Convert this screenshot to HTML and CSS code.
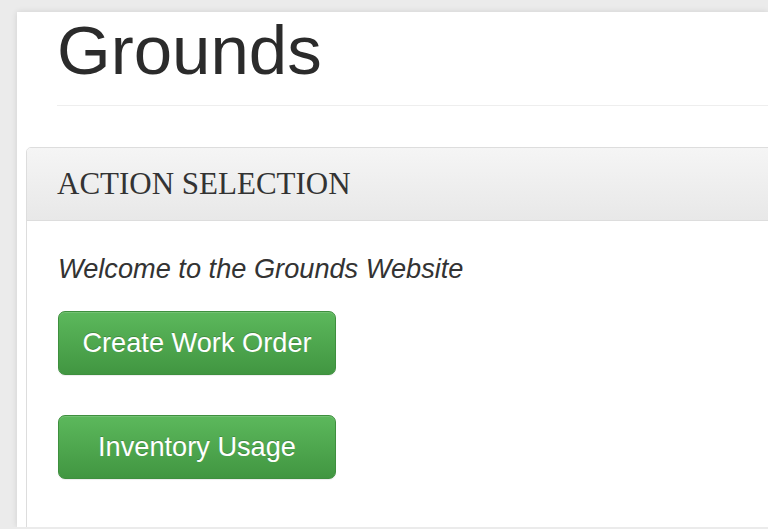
FILE: index.html
```html
<!DOCTYPE html>
<html lang="en">
<head>
<meta charset="utf-8">
<title>Grounds</title>
<link rel="stylesheet" href="styles.css">
</head>
<body>
  <div class="page">
    <div class="page-header">
      <h1>Grounds</h1>
    </div>
    <div class="panel">
      <div class="panel-heading">
        <h3 class="panel-title">ACTION SELECTION</h3>
      </div>
      <div class="panel-body">
        <p class="welcome">Welcome to the Grounds Website</p>
        <div class="actions">
          <button type="button" class="btn btn-success">Create Work Order</button>
          <button type="button" class="btn btn-success">Inventory Usage</button>
        </div>
      </div>
    </div>
  </div>
</body>
</html>
```

FILE: styles.css
```css
html, body {
  margin: 0;
  padding: 0;
}

body {
  background: #ebebeb;
  font-family: "Liberation Sans", Arial, Helvetica, sans-serif;
  font-size: 27.2px;
  line-height: 1.42857;
  color: #333;
  overflow: hidden;
}

.page {
  margin: 12px 0 0 17px;
  height: 515px;
  padding-left: 9px;
  background: #fff;
  box-shadow: 0 0 6px rgba(0, 0, 0, 0.12);
  overflow: hidden;
}

.page-header {
  margin: 0 0 41px 31px;
  padding: 1px 0 16px;
  border-bottom: 1px solid #eeeeee;
}

.page-header h1 {
  margin: 0;
  font-size: 69px;
  font-weight: 400;
  line-height: 1.1;
  color: #2b2b2b;
}

.panel {
  margin-right: -20px;
  border: 1px solid #dddddd;
  border-radius: 5px 0 0 0;
  background: #fff;
  min-height: 420px;
}

.panel-heading {
  padding: 19px 30px;
  background: linear-gradient(to bottom, #f5f5f5 0%, #e8e8e8 100%);
  border-bottom: 1px solid #dddddd;
  border-radius: 4px 0 0 0;
}

.panel-title {
  margin: 0;
  font-family: "Liberation Serif", "Times New Roman", serif;
  font-size: 31px;
  font-weight: 400;
  line-height: 34px;
  color: #333;
}

.panel-body {
  padding: 28px 31px;
}

.welcome {
  margin: 0 0 23px;
  font-style: italic;
  line-height: 39px;
}

.actions {
  display: flex;
  flex-direction: column;
  align-items: flex-start;
  gap: 40px;
}

.btn {
  box-sizing: border-box;
  width: 278px;
  height: 64px;
  padding: 0 20px;
  font-family: inherit;
  font-size: 27.2px;
  line-height: 1;
  color: #fff;
  text-align: center;
  text-shadow: 0 -1px 0 rgba(0, 0, 0, 0.2);
  border-radius: 7px;
  cursor: pointer;
}

.btn-success {
  background: linear-gradient(to bottom, #5cb85c 0%, #419641 100%);
  border: 1px solid #3e8f3e;
  box-shadow: inset 0 1px 0 rgba(255, 255, 255, 0.15), 0 1px 1px rgba(0, 0, 0, 0.075);
}
```
